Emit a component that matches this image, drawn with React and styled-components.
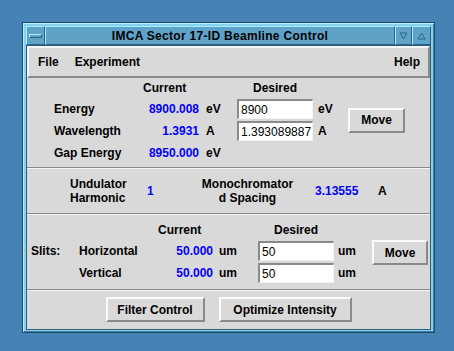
import React from "react";
import styled, { createGlobalStyle } from "styled-components";

const GlobalStyle = createGlobalStyle`
    html, body {
        margin: 0;
        padding: 0;
        background-color: #4682b4;
        font-family: "Liberation Sans", Arial, sans-serif;
    }
    body {
        width: 454px;
        height: 351px;
        overflow: hidden;
    }
`;

const StyledWindow = styled.div`
    margin: 22px 0 0 22px;
    width: 413px;
    height: 311px;
    box-sizing: border-box;
    border: 1px solid #1f4b68;
    background-color: #86d2ee;
    padding: 3px;
    display: flex;
    flex-direction: column;
    box-shadow: inset 1px 1px 0 #b4f0ff, inset -1px -1px 0 #3f7ea2;
`;

const StyledTitleBar = styled.div`
    display: flex;
    height: 19px;
    flex-shrink: 0;
`;

const StyledTitleSeg = styled.div`
    box-sizing: border-box;
    width: ${(props) => (props.$width ? `${props.$width}px` : "auto")};
    flex: ${(props) => (props.$width ? "none" : "1")};
    height: 100%;
    background-color: #5ea3c7;
    border-top: 1px solid #a9ecff;
    border-left: 1px solid #a9ecff;
    border-bottom: 1px solid #2c6385;
    border-right: 1px solid #2c6385;
    display: flex;
    align-items: center;
    justify-content: center;
    font-size: 12px;
    font-weight: 700;
    color: #000000;
    letter-spacing: 0.3px;
`;

const StyledMinBar = styled.div`
    width: 11px;
    height: 2px;
    border: 1px solid;
    border-color: #a9ecff #2c6385 #2c6385 #a9ecff;
    background-color: #5ea3c7;
`;

const StyledBody = styled.div`
    flex: 1;
    border: 1px solid #2b5d7c;
    background-color: #d9d9d9;
    display: flex;
    flex-direction: column;
    font-size: 12px;
    font-weight: 700;
    color: #000000;
`;

const StyledMenuBar = styled.div`
    height: 32px;
    box-sizing: border-box;
    border-top: 2px solid #f4f4f4;
    border-left: 2px solid #f4f4f4;
    border-bottom: 2px solid #8a8a8a;
    border-right: 2px solid #8a8a8a;
    display: flex;
    align-items: center;
    padding: 0 8px 0 9px;
    gap: 16px;
`;

const StyledMenuItem = styled.span`
    margin-left: ${(props) => (props.$push ? "auto" : "0")};
`;

const StyledSection = styled.div`
    box-sizing: border-box;
    height: ${(props) => props.$height}px;
    border-top: ${(props) => (props.$first ? "none" : "1px solid #8a8a8a")};
    box-shadow: ${(props) =>
        props.$first ? "none" : "inset 0 1px 0 #f4f4f4"};
`;

const StyledEnergyGrid = styled.div`
    display: grid;
    grid-template-columns: 90px 55px 38px 76px 35px 57px;
    grid-template-rows: 20px 22px 22px 22px;
    align-items: center;
    padding-left: 27px;
`;

const StyledSlitsGrid = styled.div`
    display: grid;
    grid-template-columns: 48px 80px 54px 45px 76px 38px 56px;
    grid-template-rows: 20px 22px 22px;
    align-items: center;
    padding: 6px 0 0 4px;
`;

const StyledCell = styled.div`
    grid-column: ${(props) => props.$col};
    grid-row: ${(props) => props.$row};
`;

const StyledHeader = styled(StyledCell)`
    justify-self: ${(props) => props.$justify || "center"};
    margin-left: ${(props) => props.$shift || 0}px;
`;

const StyledValue = styled(StyledCell)`
    color: #0000ff;
    text-align: ${(props) => props.$align || "right"};
`;

const StyledUnit = styled(StyledCell)`
    padding-left: ${(props) => props.$pad}px;
`;

const StyledInput = styled.input`
    grid-column: ${(props) => props.$col};
    grid-row: ${(props) => props.$row};
    box-sizing: border-box;
    width: 76px;
    height: 20px;
    margin: 0;
    padding: 0 0 0 2px;
    border-style: solid;
    border-width: 2px 1px 1px 2px;
    border-color: #8a8a8a #f4f4f4 #f4f4f4 #8a8a8a;
    background-color: #ffffff;
    font-family: "Liberation Sans", Arial, sans-serif;
    font-size: 12px;
    color: #000000;
    outline: none;
`;

const StyledButton = styled.button`
    box-sizing: border-box;
    width: ${(props) => props.$width}px;
    height: 25px;
    margin: 0;
    padding: 0;
    background-color: #d9d9d9;
    border-style: solid;
    border-width: 2px;
    border-color: #fbfbfb #8a8a8a #8a8a8a #fbfbfb;
    font-family: "Liberation Sans", Arial, sans-serif;
    font-size: 12px;
    font-weight: 700;
    color: #000000;
    cursor: pointer;
`;

const StyledMoveCell = styled(StyledCell)`
    align-self: ${(props) => props.$align || "center"};
`;

const StyledParamRow = styled.div`
    display: grid;
    grid-template-columns: 77px 54px 114px 63px auto;
    align-items: center;
    height: 100%;
    padding-left: 43px;
`;

const StyledTwoLine = styled.div`
    line-height: 14px;
    width: ${(props) => props.$width}px;
    text-align: ${(props) => props.$align || "left"};
`;

const StyledActions = styled.div`
    display: flex;
    justify-content: center;
    align-items: center;
    gap: 14px;
    height: 100%;
`;

const energyRows = [
    { label: "Energy", value: "8900.008", unit: "eV", input: "8900", unit2: "eV" },
    { label: "Wavelength", value: "1.3931", unit: "A", input: "1.393089887", unit2: "A" },
    { label: "Gap Energy", value: "8950.000", unit: "eV" },
];

const slitRows = [
    { label: "Horizontal", value: "50.000", input: "50" },
    { label: "Vertical", value: "50.000", input: "50" },
];

const Triangle = ({ up }) => (
    <svg width="9" height="8" viewBox="0 0 9 8">
        <path
            d={up ? "M4.5 1 L8 7 L1 7 Z" : "M1 1 L8 1 L4.5 7 Z"}
            fill="none"
            stroke="#2c6385"
            strokeWidth="1"
        />
    </svg>
);

const App = () => {
    return (
        <>
            <GlobalStyle />
            <StyledWindow>
                <StyledTitleBar>
                    <StyledTitleSeg $width={19}>
                        <StyledMinBar />
                    </StyledTitleSeg>
                    <StyledTitleSeg>IMCA Sector 17-ID Beamline Control</StyledTitleSeg>
                    <StyledTitleSeg $width={17}>
                        <Triangle />
                    </StyledTitleSeg>
                    <StyledTitleSeg $width={19}>
                        <Triangle up />
                    </StyledTitleSeg>
                </StyledTitleBar>
                <StyledBody>
                    <StyledMenuBar>
                        <StyledMenuItem>File</StyledMenuItem>
                        <StyledMenuItem>Experiment</StyledMenuItem>
                        <StyledMenuItem $push>Help</StyledMenuItem>
                    </StyledMenuBar>

                    <StyledSection $first $height={89}>
                        <StyledEnergyGrid>
                            <StyledHeader $col={2} $row={1} $justify="start" $shift={-1}>
                                Current
                            </StyledHeader>
                            <StyledHeader $col={4} $row={1}>
                                Desired
                            </StyledHeader>
                            {energyRows.map((row, index) => (
                                <React.Fragment key={index}>
                                    <StyledCell $col={1} $row={index + 2}>
                                        {row.label}
                                    </StyledCell>
                                    <StyledValue $col={2} $row={index + 2}>
                                        {row.value}
                                    </StyledValue>
                                    <StyledUnit $col={3} $row={index + 2} $pad={7}>
                                        {row.unit}
                                    </StyledUnit>
                                    {row.input ? (
                                        <>
                                            <StyledInput
                                                $col={4}
                                                $row={index + 2}
                                                defaultValue={row.input}
                                            />
                                            <StyledUnit $col={5} $row={index + 2} $pad={5}>
                                                {row.unit2}
                                            </StyledUnit>
                                        </>
                                    ) : null}
                                </React.Fragment>
                            ))}
                            <StyledMoveCell $col={6} $row="2 / 4">
                                <StyledButton $width={57}>Move</StyledButton>
                            </StyledMoveCell>
                        </StyledEnergyGrid>
                    </StyledSection>

                    <StyledSection $height={46}>
                        <StyledParamRow>
                            <StyledTwoLine $width={60}>
                                Undulator
                                <br />
                                Harmonic
                            </StyledTwoLine>
                            <StyledValue $align="left">1</StyledValue>
                            <StyledTwoLine $width={93} $align="center">
                                Monochromator
                                <br />
                                d Spacing
                            </StyledTwoLine>
                            <StyledValue $align="left">3.13555</StyledValue>
                            <div>A</div>
                        </StyledParamRow>
                    </StyledSection>

                    <StyledSection $height={76}>
                        <StyledSlitsGrid>
                            <StyledHeader $col={3} $row={1} $justify="start" $shift={-1}>
                                Current
                            </StyledHeader>
                            <StyledHeader $col={5} $row={1}>
                                Desired
                            </StyledHeader>
                            <StyledCell $col={1} $row={2}>
                                Slits:
                            </StyledCell>
                            {slitRows.map((row, index) => (
                                <React.Fragment key={index}>
                                    <StyledCell $col={2} $row={index + 2}>
                                        {row.label}
                                    </StyledCell>
                                    <StyledValue $col={3} $row={index + 2}>
                                        {row.value}
                                    </StyledValue>
                                    <StyledUnit $col={4} $row={index + 2} $pad={6}>
                                        um
                                    </StyledUnit>
                                    <StyledInput
                                        $col={5}
                                        $row={index + 2}
                                        defaultValue={row.input}
                                    />
                                    <StyledUnit $col={6} $row={index + 2} $pad={4}>
                                        um
                                    </StyledUnit>
                                </React.Fragment>
                            ))}
                            <StyledMoveCell $col={7} $row={2} $align="start">
                                <StyledButton $width={56}>Move</StyledButton>
                            </StyledMoveCell>
                        </StyledSlitsGrid>
                    </StyledSection>

                    <StyledSection $height={40}>
                        <StyledActions>
                            <StyledButton $width={99}>Filter Control</StyledButton>
                            <StyledButton $width={133}>Optimize Intensity</StyledButton>
                        </StyledActions>
                    </StyledSection>
                </StyledBody>
            </StyledWindow>
        </>
    );
};

export default App;
